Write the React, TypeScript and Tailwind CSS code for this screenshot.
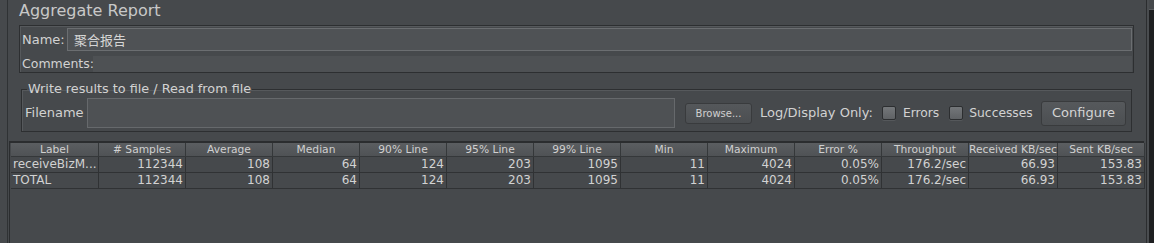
const columns = [
  { label: 'Label', w: 'w-[88px]' },
  { label: '# Samples', w: 'w-[87px]' },
  { label: 'Average', w: 'w-[87px]' },
  { label: 'Median', w: 'w-[87px]' },
  { label: '90% Line', w: 'w-[87px]' },
  { label: '95% Line', w: 'w-[87px]' },
  { label: '99% Line', w: 'w-[87px]' },
  { label: 'Min', w: 'w-[87px]' },
  { label: 'Maximum', w: 'w-[87px]' },
  { label: 'Error %', w: 'w-[87px]' },
  { label: 'Throughput', w: 'w-[87px]' },
  { label: 'Received KB/sec', w: 'w-[89px]' },
  { label: 'Sent KB/sec', w: 'w-[87px]' },
];

const rows = [
  ['receiveBizM...', '112344', '108', '64', '124', '203', '1095', '11', '4024', '0.05%', '176.2/sec', '66.93', '153.83'],
  ['TOTAL', '112344', '108', '64', '124', '203', '1095', '11', '4024', '0.05%', '176.2/sec', '66.93', '153.83'],
];

function Checkbox() {
  return (
    <span className="w-[14px] h-[14px] rounded-[2px] border border-[#2c2e30] bg-gradient-to-b from-[#74777a] to-[#5f6265] shadow-[0_1px_0_#55585b]" />
  );
}

export default function App() {
  return (
    <div className="w-[1154px] h-[243px] bg-[#46494c] flex overflow-hidden font-['DejaVu_Sans',sans-serif] text-[#d2d2d2]">
      {/* left gutter */}
      <div className="w-[8px] border-r border-[#2f3234]" />

      <div className="flex-1 flex flex-col min-w-0">
        {/* Title */}
        <div className="mt-[2px] h-[18px] pl-[11px] text-[16px] leading-[18px] text-[#c8c8c8]">Aggregate Report</div>

        {/* Name / Comments */}
        <div className="mt-[5px] ml-[11px] mr-[12px] h-[48px] border border-[#2d2f31] shadow-[inset_1px_1px_0_#56595c] pt-[2px] pl-[2px] pr-[1px] flex flex-col">
          <div className="flex items-center h-[23px]">
            <span className="w-[45px] shrink-0 text-[13px]">Name:</span>
            <div className="flex-1 h-[23px] bg-[#4f5255] border border-[#6b6e71] flex items-center pl-[6px] text-[13px] font-['Noto_Sans_CJK_SC',sans-serif] text-[#d6d6d6]">
              聚合报告
            </div>
          </div>
          <div className="flex items-center h-[16px] mt-[5px]">
            <span className="w-[71px] shrink-0 whitespace-nowrap text-[12.5px] leading-[16px]">Comments:</span>
            <div className="flex-1 h-[16px] bg-[#4e5154]" />
          </div>
        </div>

        {/* Write results fieldset */}
        <fieldset className="mt-[9px] ml-[13px] mr-[14px] h-[50px] border border-[#2d2f31] shadow-[inset_1px_1px_0_#56595c]">
          <legend className="ml-[5px] px-[1px] text-[12.8px] leading-[14px]">Write results to file / Read from file</legend>
          <div className="flex items-center pt-[2px] pl-[3px] pr-[5px]">
            <span className="w-[62px] shrink-0 text-[13px]">Filename</span>
            <div className="w-[588px] h-[30px] bg-[#4e5154] border border-[#66696c]" />
            <button className="ml-[10px] w-[67px] h-[21px] rounded-[3px] border border-[#393b3d] bg-gradient-to-b from-[#55585b] to-[#4b4e51] text-[10px] text-[#d0d0d0]">
              Browse...
            </button>
            <span className="ml-[8px] text-[13px] whitespace-nowrap">Log/Display Only:</span>
            <span className="ml-[9px] flex"><Checkbox /></span>
            <span className="ml-[7px] text-[12.3px]">Errors</span>
            <span className="ml-[10px] flex"><Checkbox /></span>
            <span className="ml-[6px] text-[12.3px]">Successes</span>
            <button className="ml-auto w-[85px] h-[25px] rounded-[3px] border border-[#393b3d] bg-gradient-to-b from-[#56595c] to-[#4c4f52] text-[13px] text-[#d4d4d4]">
              Configure
            </button>
          </div>
        </fieldset>

        {/* Results table */}
        <div className="mt-[9px] ml-[1px] mr-[2px] flex-1 border-l border-t-2 border-[#2b2d2f] pl-[1px]">
          <div className="flex">
            {columns.map(c => (
              <div
                key={c.label}
                className={`${c.w} h-[14px] shrink-0 border-r border-b border-[#35383a] bg-gradient-to-b from-[#5b5e61] to-[#4f5255] text-center text-[10.7px] leading-[13px] text-[#d0d0d0] whitespace-nowrap overflow-hidden`}
              >
                {c.label}
              </div>
            ))}
          </div>
          {rows.map((r, ri) => (
            <div key={ri} className="flex">
              {r.map((v, ci) => (
                <div
                  key={ci}
                  className={`${columns[ci].w} h-[16px] shrink-0 border-r border-b border-[#303234] text-[12px] leading-[15px] whitespace-nowrap overflow-hidden ${ci === 0 ? 'text-left pl-[2px]' : 'text-right pr-[2px]'}`}
                >
                  {v}
                </div>
              ))}
            </div>
          ))}
        </div>
      </div>

      {/* right edge */}
      <div className="w-[1px] bg-[#2b2d2f]" />
      <div className="w-[2px] bg-[#4a4d50]" />
      <div className="w-[5px] flex flex-col">
        <div className="h-[10px] bg-[#45484b] border-b border-[#5a5d60]" />
        <div className="flex-1 bg-[#1e1f21]" />
      </div>
    </div>
  );
}
